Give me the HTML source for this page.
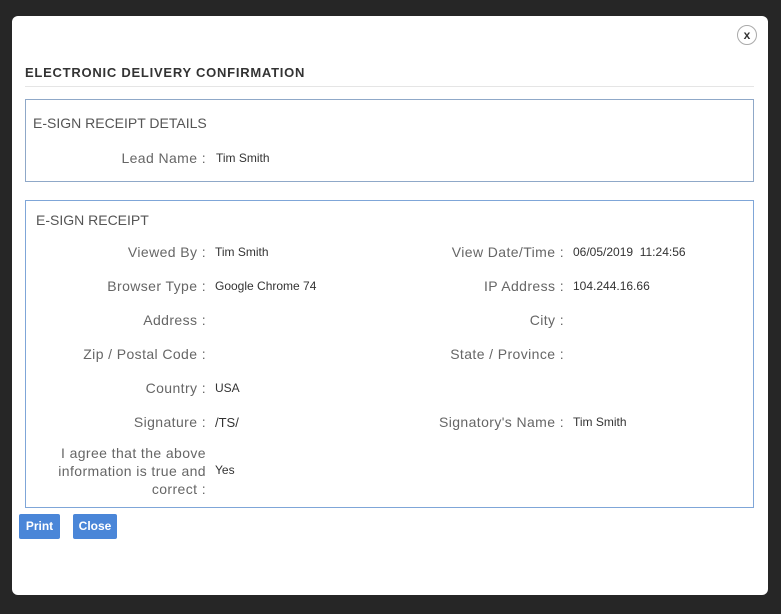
<!DOCTYPE html>
<html><head><style>
body{margin:0;width:781px;height:614px;background:#262626;position:relative;overflow:hidden;font-family:"Liberation Sans",sans-serif}
.m{position:absolute;left:12px;top:16px;width:756px;height:579px;background:#fff;border-radius:6px}
.a{position:absolute;white-space:nowrap}
.l{position:absolute;text-align:right;font-size:14px;color:#666;white-space:nowrap;letter-spacing:0.4px}
.v{position:absolute;font-size:12px;color:#333;white-space:nowrap}
.box{position:absolute;border:1px solid #8fa8c8}
.btn{position:absolute;top:514px;height:25px;background:#4a86d8;color:#fff;font-size:12px;font-weight:bold;line-height:25px;text-align:center;border-radius:2px}
</style></head><body>
<div class="m"></div>
<div class="a" style="left:737px;top:25px;width:18px;height:18px;border:1px solid #aaa;border-radius:50%;text-align:center;line-height:18px;font-size:12px;font-weight:bold;color:#333">x</div>
<div class="a" style="left:25px;top:65px;font-size:13px;font-weight:bold;color:#333;letter-spacing:0.75px">ELECTRONIC DELIVERY CONFIRMATION</div>
<div class="a" style="left:25px;top:86px;width:729px;height:1px;background:#e5e5e5"></div>
<div class="box" style="left:25px;top:99px;width:727px;height:81px"></div>
<div class="a" style="left:33px;top:115px;font-size:14px;color:#555">E-SIGN RECEIPT DETAILS</div>
<div class="l" style="right:575px;top:150px">Lead Name :</div><div class="v" style="left:216px;top:151px">Tim Smith</div>
<div class="box" style="left:25px;top:200px;width:727px;height:306px;border-color:#7fa6d8"></div>
<div class="a" style="left:36px;top:212px;font-size:14px;color:#555">E-SIGN RECEIPT</div>
<div class="l" style="right:575px;top:244px">Viewed By :</div><div class="v" style="left:215px;top:245px">Tim Smith</div>
<div class="l" style="right:217px;top:244px">View Date/Time :</div><div class="v" style="left:573px;top:245px">06/05/2019&nbsp; 11:24:56</div>
<div class="l" style="right:575px;top:278px">Browser Type :</div><div class="v" style="left:215px;top:279px">Google Chrome 74</div>
<div class="l" style="right:217px;top:278px">IP Address :</div><div class="v" style="left:573px;top:279px">104.244.16.66</div>
<div class="l" style="right:575px;top:312px">Address :</div>
<div class="l" style="right:217px;top:312px">City :</div>
<div class="l" style="right:575px;top:346px">Zip / Postal Code :</div>
<div class="l" style="right:217px;top:346px">State / Province :</div>
<div class="l" style="right:575px;top:380px">Country :</div><div class="v" style="left:215px;top:381px">USA</div>
<div class="l" style="right:575px;top:414px">Signature :</div><div class="v" style="left:215px;top:415px;font-size:13px">/TS/</div>
<div class="l" style="right:217px;top:414px">Signatory's Name :</div><div class="v" style="left:573px;top:415px">Tim Smith</div>
<div class="l" style="right:575px;top:444px;line-height:18px">I agree that the above<br>information is true and<br>correct :</div>
<div class="v" style="left:215px;top:463px">Yes</div>
<div class="btn" style="left:19px;width:41px">Print</div>
<div class="btn" style="left:73px;width:44px">Close</div>
</body></html>
